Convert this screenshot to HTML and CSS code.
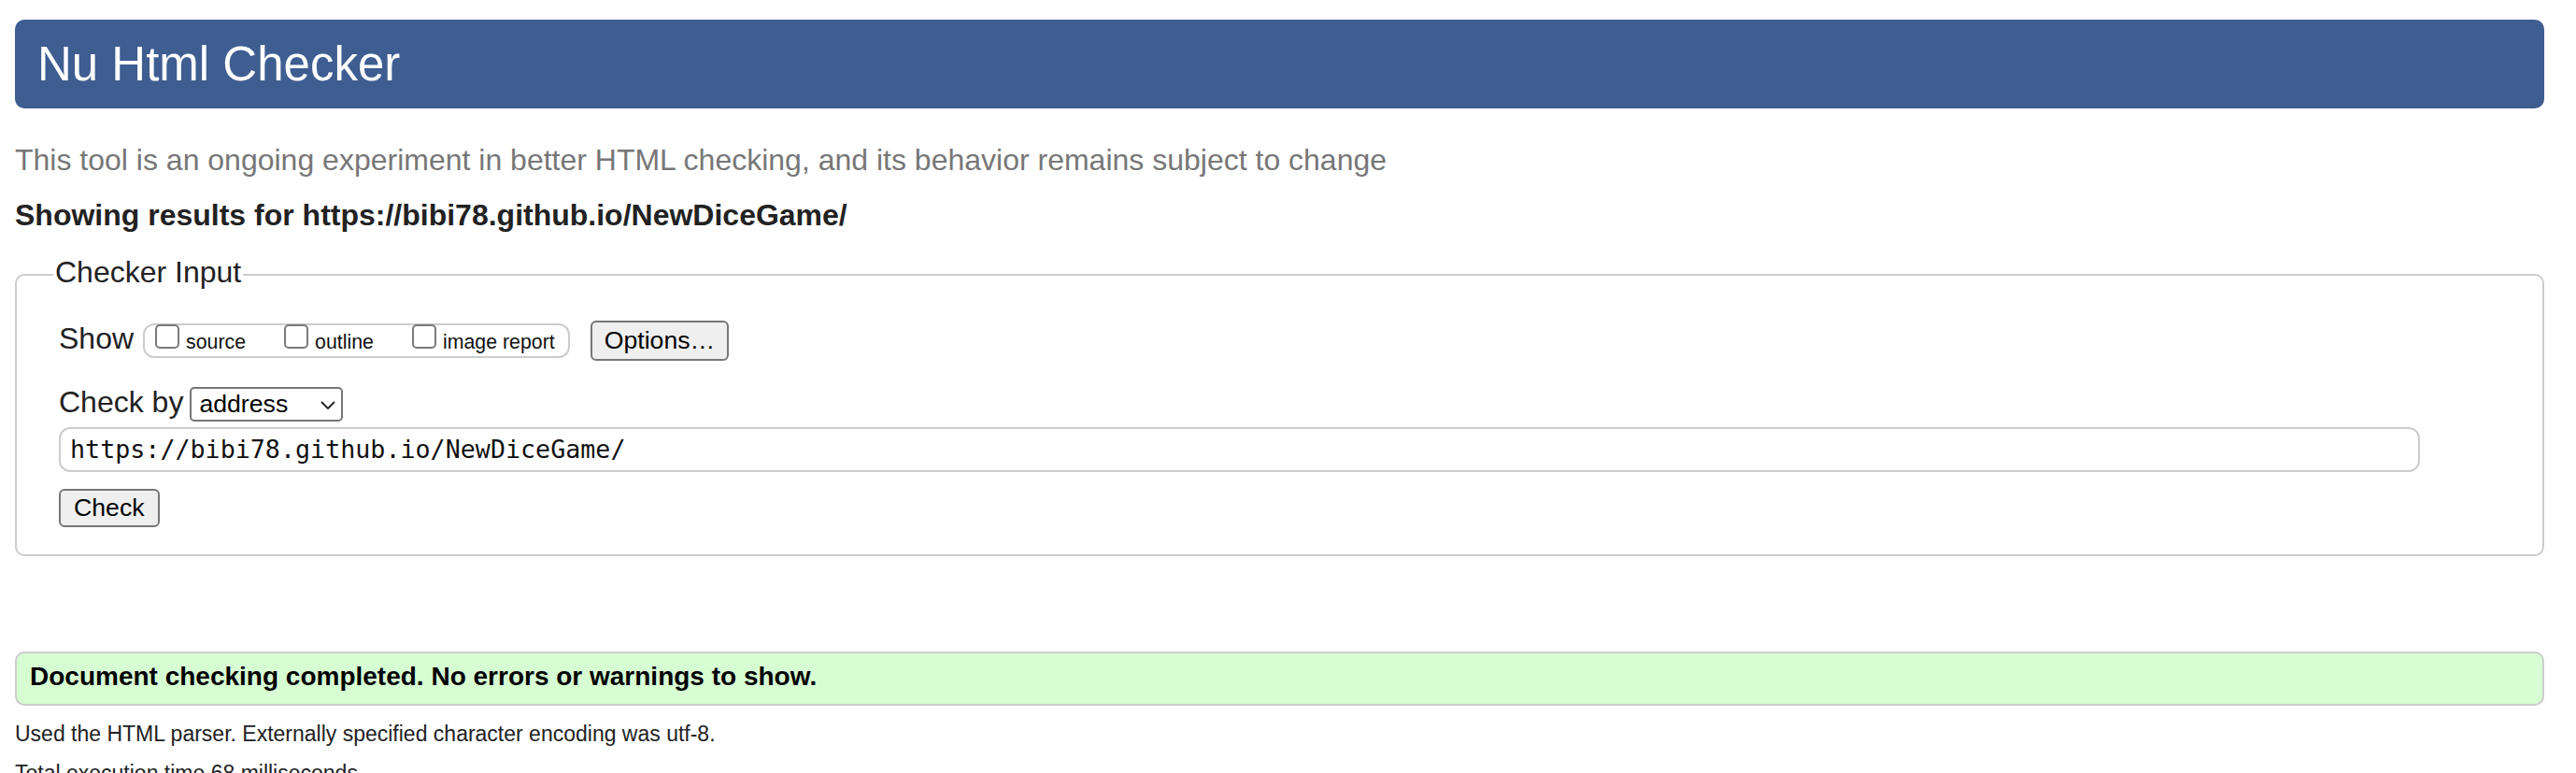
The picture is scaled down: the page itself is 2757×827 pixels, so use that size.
FILE: index.html
```html
<!DOCTYPE html>
<html lang="en">
<head>
<meta charset="utf-8">
<title>Showing results for https://bibi78.github.io/NewDiceGame/ - Nu Html Checker</title>
<link rel="stylesheet" href="styles.css">
</head>
<body>
<h1 class="title">Nu Html Checker</h1>
<p class="intro">This tool is an ongoing experiment in better HTML checking, and its behavior remains subject to change</p>
<p class="results-for">Showing results for https://bibi78.github.io/NewDiceGame/</p>
<form class="checker">
  <fieldset class="checker-input">
    <legend class="checker-legend">Checker Input</legend>
    <div class="row show-row">
      <span class="row-label">Show</span>
      <span class="option-group">
        <label class="opt"><input type="checkbox" class="box"><span class="opt-text">source</span></label>
        <label class="opt"><input type="checkbox" class="box"><span class="opt-text">outline</span></label>
        <label class="opt"><input type="checkbox" class="box"><span class="opt-text">image report</span></label>
      </span>
      <button type="button" class="btn btn-options">Options…</button>
    </div>
    <div class="row checkby-row">
      <label class="row-label checkby-label" for="docselect">Check by</label>
      <span class="select-wrap">
        <select id="docselect" class="select"><option>address</option></select>
        <svg class="chevron" width="16" height="9" viewBox="0 0 16 9" aria-hidden="true"><polyline points="1,1 8,8 15,1" fill="none" stroke="#222" stroke-width="1.8"/></svg>
      </span>
    </div>
    <input class="url" type="url" value="https://bibi78.github.io/NewDiceGame/">
    <div class="submit-row"><button type="button" class="btn btn-check">Check</button></div>
  </fieldset>
</form>
<p class="success">Document checking completed. No errors or warnings to show.</p>
<p class="details">Used the HTML parser. Externally specified character encoding was utf-8.</p>
<p class="details">Total execution time 68 milliseconds.</p>
</body>
</html>
```

FILE: styles.css
```css
html, body {
  margin: 0;
  background: #ffffff;
}

body {
  padding: 0 34px 0 16px;
  font-family: "Liberation Sans", Arial, Helvetica, sans-serif;
  color: #222222;
}

.title {
  margin: 21px 0 0;
  height: 95px;
  line-height: 95px;
  padding: 0 24px;
  background: #3e5d91;
  color: #ffffff;
  font-size: 51px;
  font-weight: normal;
  border-radius: 10px;
}

.intro {
  margin: 35px 0 0;
  font-size: 32px;
  line-height: 40px;
  color: #777777;
}

.results-for {
  margin: 19px 0 0;
  font-size: 32px;
  line-height: 40px;
  font-weight: bold;
  color: #222222;
}

.checker {
  margin: 23px 0 0;
}

.checker-input {
  margin: 0;
  min-width: 0;
  border: 2px solid #cccccc;
  border-radius: 10px;
  padding: 29px 0 29px 45px;
}

.checker-legend {
  font-size: 32px;
  line-height: 37px;
  padding: 0 2px 4px;
  margin-left: -6px;
  color: #222222;
}

.row {
  display: flex;
  align-items: baseline;
}

.row-label {
  font-size: 32px;
  line-height: 37px;
  margin-right: 10px;
}

.checkby-label {
  margin-right: 7px;
}

.option-group {
  display: inline-flex;
  align-items: baseline;
  height: 37px;
  box-sizing: border-box;
  border: 2px solid #cccccc;
  border-radius: 12px;
  padding: 0 14px 0 11px;
  margin-right: 22px;
}

.opt {
  display: inline-flex;
  align-items: baseline;
  margin-right: 41px;
}

.opt:last-child {
  margin-right: 0;
}

.box {
  appearance: none;
  -webkit-appearance: none;
  width: 26px;
  height: 26px;
  margin: -1px 7px 0 0;
  box-sizing: border-box;
  border: 2px solid #7a7a7a;
  border-radius: 5px;
  background: #ffffff;
}

.opt-text {
  font-size: 21.33px;
  line-height: 24px;
  color: #111111;
}

.btn {
  font-family: "Liberation Sans", Arial, Helvetica, sans-serif;
  font-size: 26.67px;
  line-height: 30px;
  color: #000000;
  background: #efefef;
  border: 2px solid #767676;
  border-radius: 6px;
  padding: 0 13px;
  margin: 0;
}

.btn-options {
  padding-top: 4px;
  padding-bottom: 5px;
}

.btn-check {
  padding: 3px 14px 4px;
}

.checkby-row {
  margin-top: 26px;
}

.select-wrap {
  position: relative;
  display: inline-block;
}

.select {
  appearance: none;
  -webkit-appearance: none;
  width: 164px;
  height: 37px;
  box-sizing: border-box;
  margin: 0;
  padding: 0 30px 0 8px;
  font-family: "Liberation Sans", Arial, Helvetica, sans-serif;
  font-size: 26.67px;
  color: #000000;
  background: #ffffff;
  border: 2px solid #767676;
  border-radius: 5px;
}

.chevron {
  position: absolute;
  left: 140px;
  top: 15px;
}

.url {
  display: block;
  margin: 6px 0 0;
  width: 2527px;
  height: 48px;
  box-sizing: border-box;
  padding: 0 10px;
  border: 2px solid #cccccc;
  border-radius: 12px;
  font-family: "DejaVu Sans Mono", "Liberation Mono", monospace;
  font-size: 26.7px;
  color: #111111;
  background: #ffffff;
}

.submit-row {
  margin-top: 18px;
  display: flex;
}

.success {
  margin: 102px 0 0;
  border: 2px solid #cccccc;
  border-radius: 10px;
  background: #d7fdd3;
  padding: 9px 14px 13px;
  font-size: 28px;
  line-height: 32px;
  font-weight: bold;
  color: #000000;
}

.details {
  margin: 16px 0 0;
  font-size: 23px;
  line-height: 28px;
  color: #222222;
}

.details + .details {
  margin-top: 14px;
}
```
